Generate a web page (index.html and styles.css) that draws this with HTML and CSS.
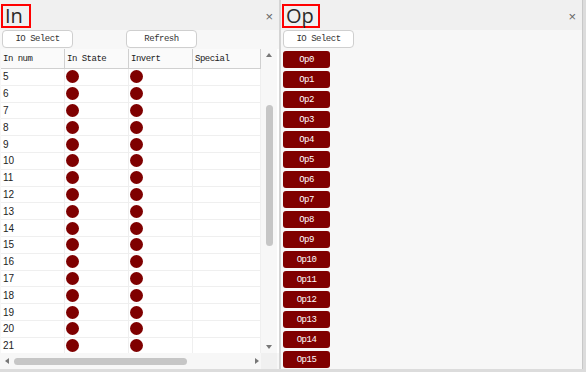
FILE: index.html
```html
<!DOCTYPE html>
<html>
<head>
<meta charset="utf-8">
<link rel="stylesheet" href="styles.css">
</head>
<body>
<div class="app">
  <section class="panel left">
    <header class="titlebar">
      <span class="title">In</span>
      <span class="close">×</span>
    </header>
    <div class="content">
      <div class="toolbar">
        <button class="btn">IO Select</button>
        <button class="btn refresh">Refresh</button>
      </div>
      <div class="tablewrap">
        <div class="tablearea">
          <div class="table">
            <div class="hrow">
              <div class="hc">In num</div>
              <div class="hc">In State</div>
              <div class="hc">Invert</div>
              <div class="hc">Special</div>
            </div>
            <div class="rows" id="rows"></div>
          </div>
          <div class="vscroll">
            <span class="arr up"></span>
            <span class="vthumb"></span>
            <span class="arr down"></span>
          </div>
        </div>
        <div class="hscroll">
          <div class="htrack">
            <span class="arr lft"></span>
            <span class="hthumb"></span>
            <span class="arr rgt"></span>
          </div>
          <div class="corner"></div>
        </div>
      </div>
    </div>
  </section>
  <div class="divider"></div>
  <section class="panel right">
    <header class="titlebar">
      <span class="title">Op</span>
      <span class="close">×</span>
    </header>
    <div class="content">
      <div class="toolbar">
        <button class="btn">IO Select</button>
      </div>
      <div class="oplist" id="ops"></div>
    </div>
  </section>
</div>
<script>
  var rows = document.getElementById('rows');
  for (var i = 5; i <= 21; i++) {
    var r = document.createElement('div');
    r.className = 'row';
    r.innerHTML = '<div class="c num">' + i + '</div><div class="c"><span class="dot"></span></div><div class="c"><span class="dot"></span></div><div class="c"></div>';
    rows.appendChild(r);
  }
  var ops = document.getElementById('ops');
  for (var j = 0; j <= 15; j++) {
    var b = document.createElement('button');
    b.className = 'op';
    b.textContent = 'Op' + j;
    ops.appendChild(b);
  }
</script>
</body>
</html>
```
FILE: styles.css
```css
html, body {
  margin: 0;
  padding: 0;
}
body {
  width: 586px;
  height: 372px;
  overflow: hidden;
  background: #dcdcdc;
  font-family: "Liberation Sans", Arial, sans-serif;
}
.app {
  display: flex;
  height: 369px;
}
.panel {
  display: flex;
  flex-direction: column;
  background: #f7f7f7;
}
.left { width: 279px; }
.divider { width: 2px; background: #d4d4d4; }
.right { width: 301px; border-right: 1px solid #c8c8c8; }
.titlebar {
  height: 30px;
  flex: none;
  display: flex;
  align-items: center;
  justify-content: space-between;
  background: #f0f0f0;
  box-sizing: border-box;
}
.title {
  margin-left: 1px;
  margin-top: 2px;
  border: 2px solid #f00;
  height: 20px;
  line-height: 20px;
  padding: 0 3px 0 2px;
  font-size: 20px;
  color: #2a2a2a;
  font-family: "Open Sans", "Liberation Sans", sans-serif;
}
.left .title { width: 21px; }
.right .title { width: 29px; }
.close {
  font-size: 13px;
  color: #666;
  margin-right: 6px;
  margin-top: 2px;
}
.content {
  flex: 1;
  display: flex;
  flex-direction: column;
  min-height: 0;
}
.toolbar {
  display: flex;
  gap: 53px;
  padding: 0 0 1px 2px;
  height: 18px;
}
.btn {
  width: 71px;
  height: 18px;
  margin: 0;
  padding: 0;
  background: #fff;
  border: 1px solid #cfcfcf;
  border-radius: 4px;
  font-family: "Liberation Mono", monospace;
  font-size: 9px;
  letter-spacing: -0.5px;
  color: #333;
}
.tablewrap {
  flex: 1;
  display: flex;
  flex-direction: column;
  margin-left: 1px;
  background: #fff;
  min-height: 0;
}
.tablearea {
  flex: 1;
  display: flex;
  min-height: 0;
}
.table {
  width: 260px;
  overflow: hidden;
}
.hrow {
  display: grid;
  grid-template-columns: 64px 64px 64px 68px;
  height: 20px;
  background: #fafafa;
  border-bottom: 1px solid #d0d0d0;
  box-sizing: border-box;
}
.hc {
  border-right: 1px solid #d0d0d0;
  font-family: "Liberation Mono", monospace;
  font-size: 9px;
  letter-spacing: -0.5px;
  line-height: 21px;
  padding-left: 2px;
  color: #222;
}
.row {
  display: grid;
  grid-template-columns: 64px 64px 64px 68px;
  height: 16.8px;
  box-sizing: border-box;
  border-bottom: 1px solid #efefef;
}
.c {
  border-right: 1px solid #efefef;
  display: flex;
  align-items: center;
}
.num {
  font-size: 10px;
  color: #222;
  padding-left: 2px;
}
.dot {
  width: 13px;
  height: 13px;
  border-radius: 50%;
  background: #7f0000;
  margin-left: 1px;
}
.vscroll {
  width: 16px;
  position: relative;
  background: #f7f7f7;
}
.vthumb {
  position: absolute;
  left: 5px;
  top: 56px;
  width: 7px;
  height: 141px;
  border-radius: 4px;
  background: #c6c6c6;
}
.arr {
  position: absolute;
  width: 0;
  height: 0;
  border: 3px solid transparent;
}
.up { left: 5px; top: 4px; border-bottom: 4px solid #777; border-top: 0; }
.down { left: 5px; bottom: 4px; border-top: 4px solid #777; border-bottom: 0; }
.hscroll {
  height: 16px;
  flex: none;
  display: flex;
  background: #f7f7f7;
}
.htrack {
  width: 260px;
  position: relative;
}
.hthumb {
  position: absolute;
  left: 13px;
  top: 5px;
  width: 173px;
  height: 7px;
  border-radius: 4px;
  background: #c6c6c6;
}
.lft { left: 4px; top: 5px; border-right: 4px solid #777; border-left: 0; }
.rgt { left: 254px; top: 5px; border-left: 4px solid #777; border-right: 0; }
.corner { width: 16px; background: #f0f0f0; }
.oplist {
  display: flex;
  flex-direction: column;
  gap: 3px;
  padding: 2px 0 0 2px;
}
.op {
  width: 47px;
  height: 17px;
  margin: 0;
  padding: 0;
  border: 0;
  border-radius: 3px;
  background: #800000;
  color: #fff;
  font-family: "Liberation Mono", monospace;
  font-size: 9px;
  letter-spacing: -0.5px;
}
```
